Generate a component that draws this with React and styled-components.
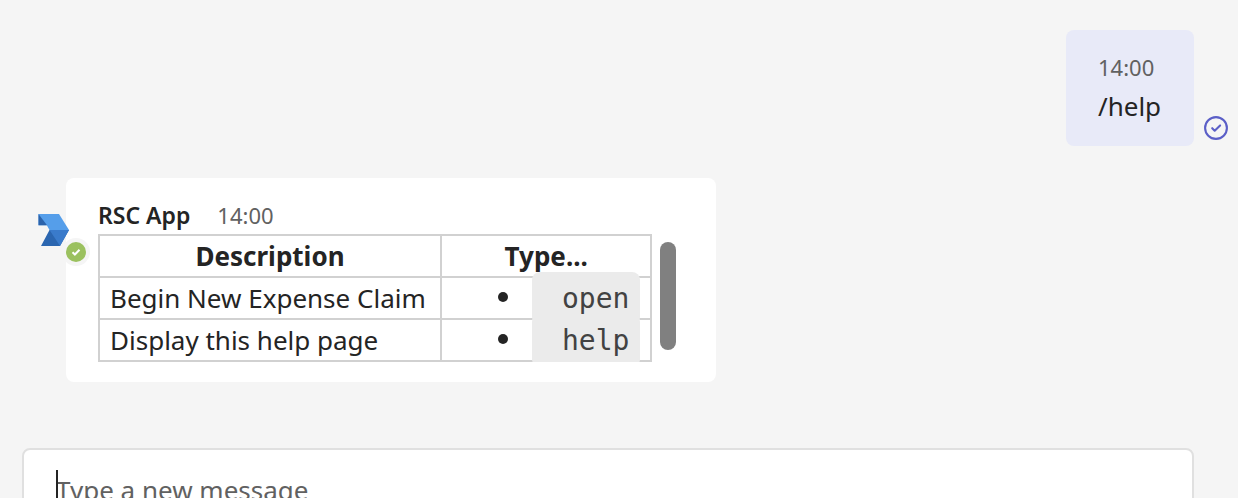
import React from "react";
import styled, { createGlobalStyle } from "styled-components";

const GlobalStyle = createGlobalStyle`
  * { box-sizing: border-box; }
  body {
    margin: 0;
    background: #f5f5f5;
    color: #242424;
    font-family: "Segoe UI", "Noto Sans", "Open Sans", sans-serif;
    font-size: 26px;
    line-height: 40px;
  }
`;

const Page = styled.div`
  display: flex;
  flex-direction: column;
  height: 100vh;
  overflow: hidden;
  padding: 30px 10px 0 22px;
`;

const Thread = styled.main`
  display: flex;
  flex-direction: column;
  flex: none;
  gap: 32px;
`;

const OwnMessage = styled.article`
  display: flex;
  justify-content: flex-end;
  align-items: flex-end;
  gap: 10px;
`;

const Bubble = styled.div`
  min-width: 128px;
  padding: 21px 32px 20px;
  border-radius: 8px;
  background: #e8eaf8;
`;

const Text = styled.p`
  margin: 3px 0 0;
`;

const Time = styled.time`
  display: block;
  color: #616161;
  font-size: 22px;
  line-height: 32px;
`;

const SentIcon = styled.svg`
  flex: none;
  width: 24px;
  height: 24px;
  margin-bottom: 6px;
`;

const BotMessage = styled.article`
  display: flex;
  align-items: flex-start;
`;

const Avatar = styled.div`
  position: relative;
  flex: none;
  width: 44px;
  height: 72px;
  padding: 36px 0 0 16px;
`;

const Logo = styled.svg`
  position: relative;
  display: block;
  width: 32px;
  height: 32px;
`;

const Presence = styled.svg`
  position: absolute;
  top: 60px;
  left: 40px;
  width: 28px;
  height: 28px;
`;

const Card = styled.div`
  padding: 21px 40px 20px 32px;
  border-radius: 8px;
  background: #fff;
`;

const CardHeader = styled.header`
  display: flex;
  gap: 27px;
  padding-bottom: 3px;
`;

const Sender = styled.span`
  font-size: 23px;
  font-weight: 600;
  line-height: 32px;
`;

const Scroller = styled.div`
  display: flex;
  gap: 8px;
  overflow: hidden;
`;

const Thumb = styled.div`
  width: 16px;
  margin: 8px 0 12px;
  border-radius: 8px;
  background: #808080;
`;

const Table = styled.table`
  border-collapse: collapse;

  th, td {
    height: 42px;
    padding: 0 10px;
    border: 2px solid #d1d1d1;
    text-align: left;
  }

  th {
    font-weight: 700;
    text-align: center;
  }

  th:first-child {
    min-width: 342px;
  }
`;

const Commands = styled.ul`
  margin: 0;
  padding: 0 0 0 46px;
  list-style: none;

  li::before {
    content: "";
    display: inline-block;
    width: 10px;
    height: 10px;
    margin-right: 24px;
    border-radius: 50%;
    background: #242424;
    vertical-align: 6px;
  }
`;

const Code = styled.code`
  padding: 10px 11px 10px 30px;
  border-radius: 8px;
  background: #ebebeb;
  color: #424242;
  font-family: "DejaVu Sans Mono", monospace;
  font-size: 28px;
  line-height: 32px;
`;

const Composer = styled.form`
  position: relative;
  flex: none;
  margin: 66px 34px 0 0;
  padding: 20px 32px;
  border: 2px solid #e0e0e0;
  border-radius: 8px;
  background: #fff;
`;

const MessageInput = styled.input`
  display: block;
  width: 100%;
  height: 40px;
  padding: 0;
  border: 0;
  outline: 0;
  background: none;
  color: inherit;
  font: inherit;

  &::placeholder {
    color: #616161;
    opacity: 1;
  }
`;

const Caret = styled.span`
  position: absolute;
  top: 20px;
  left: 32px;
  width: 2px;
  height: 40px;
  background: #242424;
`;

const rows = [
  ["Begin New Expense Claim", "open"],
  ["Display this help page", "help"],
];

export default function App() {
  return (
    <Page>
      <GlobalStyle />
      <Thread>
        <OwnMessage>
          <Bubble>
            <Time>14:00</Time>
            <Text>/help</Text>
          </Bubble>
          <SentIcon viewBox="0 0 24 24" fill="none" stroke="#5b5fc7" role="img" aria-label="Sent">
            <circle cx="12" cy="12" r="10.9" strokeWidth="2.1" />
            <path d="M8.2 12.2l2.5 2.5 5.4-5.3" strokeWidth="2.1" strokeLinecap="round" strokeLinejoin="round" />
          </SentIcon>
        </OwnMessage>

        <BotMessage>
          <Avatar>
            <Logo viewBox="0 0 32 32" aria-hidden="true">
              <path d="M.5 0H21L31 16H11.5L8.8 11.2H.5z" fill="#559eea" />
              <path d="M.5 0L9 11.2H.5z" fill="#2b63ab" />
              <path d="M11.5 16H31L22 32H3z" fill="#2b66b0" />
              <path d="M11.5 16H31L22 32z" fill="#3a7bcb" />
            </Logo>
            <Presence viewBox="0 0 28 28" role="img" aria-label="Available">
              <circle cx="14" cy="14" r="14" fill="#f5f5f5" />
              <circle cx="14" cy="14" r="10" fill="#9bc15f" />
              <path d="M10.5 14.2l2.4 2.3 4.6-4.8" fill="none" stroke="#fff" strokeWidth="2" />
            </Presence>
          </Avatar>
          <Card>
            <CardHeader>
              <Sender>RSC App</Sender>
              <Time>14:00</Time>
            </CardHeader>
            <Scroller>
              <Table>
                <thead>
                  <tr>
                    <th scope="col">Description</th>
                    <th scope="col">Type...</th>
                  </tr>
                </thead>
                <tbody>
                  {rows.map(([description, command]) => (
                    <tr key={command}>
                      <td>{description}</td>
                      <td>
                        <Commands>
                          <li><Code>{command}</Code></li>
                        </Commands>
                      </td>
                    </tr>
                  ))}
                </tbody>
              </Table>
              <Thumb />
            </Scroller>
          </Card>
        </BotMessage>
      </Thread>

      <Composer>
        <MessageInput aria-label="Message" placeholder="Type a new message" />
        <Caret />
      </Composer>
    </Page>
  );
}
